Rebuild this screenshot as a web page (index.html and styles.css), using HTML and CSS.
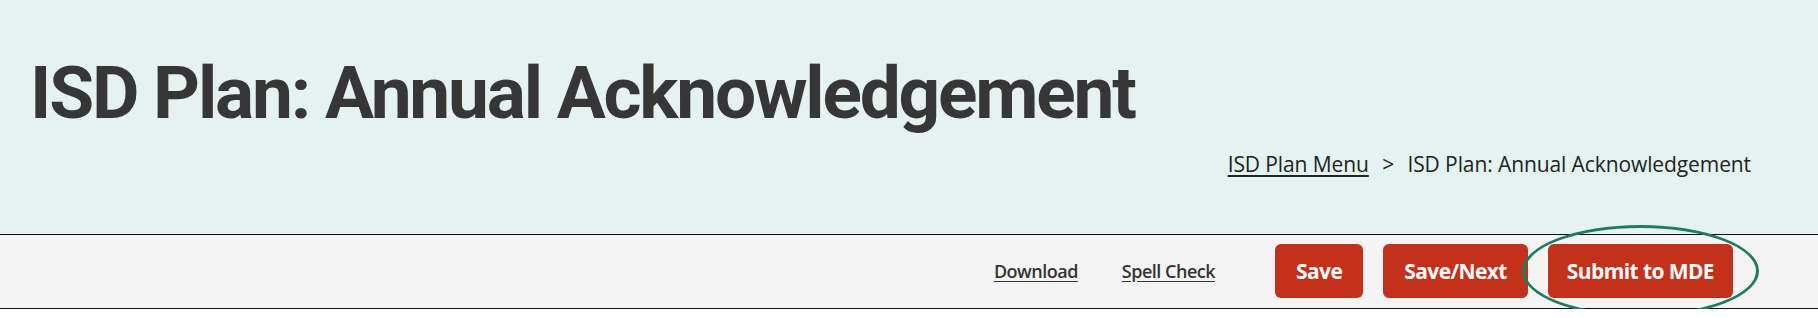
FILE: index.html
```html
<!DOCTYPE html>
<html lang="en">
<head>
  <meta charset="UTF-8">
  <title>ISD Plan: Annual Acknowledgement</title>
  <link rel="stylesheet" href="styles.css">
</head>
<body>
<!-- Page title and breadcrumb -->
<header class="page-header">
  <h1>ISD Plan: Annual Acknowledgement</h1>
  <nav class="breadcrumb">
    <a href="#">ISD Plan Menu</a>
    <span class="sep">&gt;</span>
    <span>ISD Plan: Annual Acknowledgement</span>
  </nav>
</header>

<!-- Toolbar with actions -->
<div class="toolbar">
  <a class="tool-link" href="#">Download</a>
  <a class="tool-link" href="#">Spell Check</a>
  <button class="btn btn-save" type="button">Save</button>
  <button class="btn" type="button">Save/Next</button>
  <span class="highlight">
    <button class="btn" type="button">Submit to MDE</button>
  </span>
</div>
</body>
</html>
```

FILE: styles.css
```css
/* base */
body {
  margin: 0;
  font-family: "Open Sans", "Liberation Sans", sans-serif;
  color: #333;
  background: #fff;
}

/* header band */
.page-header {
  background: #e4f2f1;
  border-bottom: 1px solid #111;
  height: 235px;
  box-sizing: border-box;
  padding: 0 67px 0 30px;
  display: flex;
  flex-direction: column;
}

h1 {
  margin: 51px 0 0 0;
  font-family: Roboto, "Liberation Sans", sans-serif;
  font-weight: 700;
  font-size: 73px;
  line-height: 84px;
  color: #363636;
  letter-spacing: -2.2px;
}

.breadcrumb {
  align-self: flex-end;
  margin-top: 14px;
  font-size: 21px;
  line-height: 30px;
  letter-spacing: -0.1px;
  color: #222;
}

.breadcrumb a {
  color: #222;
  text-decoration: underline;
  text-underline-offset: 3px;
}

.breadcrumb .sep {
  margin: 0 8px;
}

/* toolbar */
.toolbar {
  background: #f4f4f4;
  border-bottom: 1px solid #111;
  height: 74px;
  box-sizing: border-box;
  padding: 0 85px 2px 0;
  display: flex;
  justify-content: flex-end;
  align-items: center;
}

.tool-link {
  color: #333;
  font-size: 18px;
  font-weight: 600;
  letter-spacing: -0.5px;
  text-decoration: underline;
  text-underline-offset: 3px;
  margin-right: 44px;
}

.tool-link:nth-child(2) {
  margin-right: 60px;
}

.btn {
  background: #c3301c;
  color: #fff;
  border: 0;
  border-radius: 6px;
  height: 54px;
  padding: 0 21px;
  font-family: "Open Sans", "Liberation Sans", sans-serif;
  font-size: 21px;
  font-weight: 700;
  letter-spacing: -0.6px;
  margin-left: 20px;
}

.btn-save {
  margin-left: 0;
}

/* green circle drawn around submit */
.highlight {
  position: relative;
  display: flex;
  margin-left: 20px;
}

.highlight .btn {
  margin-left: 0;
  padding: 0 19px;
}

.highlight::after {
  content: "";
  position: absolute;
  left: -26px;
  right: -26px;
  top: -19px;
  bottom: -19px;
  border: 3px solid #1e7b5f;
  border-radius: 50%;
  pointer-events: none;
}
```
